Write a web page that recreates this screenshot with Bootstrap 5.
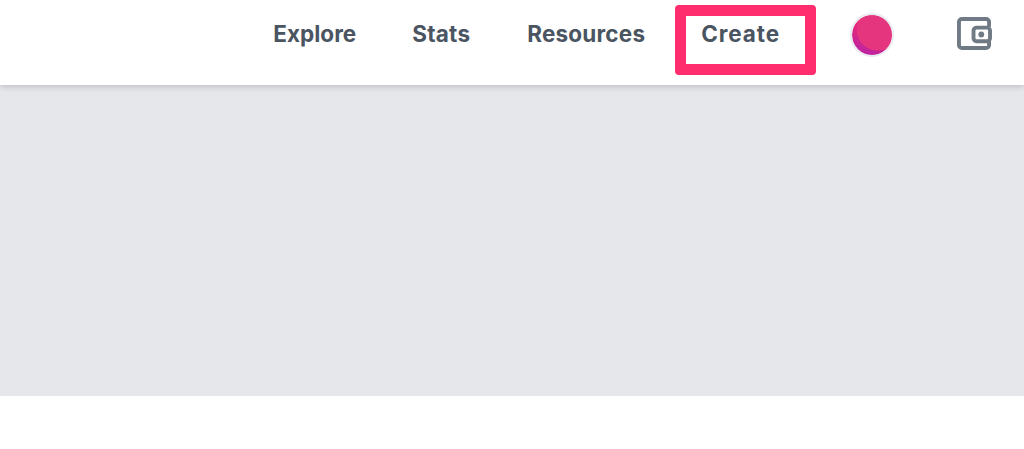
<!DOCTYPE html>
<html lang="en">
<head>
<meta charset="utf-8">
<title>Create</title>
<link href="https://cdn.jsdelivr.net/npm/bootstrap@5.3.0/dist/css/bootstrap.min.css" rel="stylesheet">
<style>
body { background: #fff; overflow: hidden; font-family: "Inter", "Noto Sans", sans-serif; }
.site-head { height: 85px; padding: 0 32px 17px 0; background: #fff; box-shadow: 0 2px 6px rgba(0,0,0,.16); z-index: 2; }
.site-link { padding: 0 28px; font-size: 22.5px; font-weight: 700; line-height: 32px; letter-spacing: .1px; color: #4a5561; text-decoration: none; }
.link-explore { letter-spacing: 0; }
.link-stats { letter-spacing: .25px; }
.link-resources { letter-spacing: .2px; margin-left: 1px; }
.link-create { letter-spacing: .9px; }
.hl-item { margin-right: 42px; }
.hl-frame { position: absolute; left: 2px; top: -13px; width: 141px; height: 70px; border: 11px solid #ff2d6e; border-radius: 4px; pointer-events: none; }
.avatar-dot { width: 44px; height: 44px; margin-top: 2px; border: 2px solid #e9ebef; border-radius: 50%; background: radial-gradient(circle 21px at 64% 37%, #e5357f 0 20.5px, rgba(229,53,127,0) 21px), linear-gradient(200deg, #ec2a74 35%, #c0249e 85%); background-clip: padding-box; }
.wallet-ico { margin-left: 63px; margin-bottom: 2px; }
.hero-band { height: 311px; background: #e5e7eb; }
</style>
</head>
<body>
<header class="site-head d-flex justify-content-end align-items-center position-relative">
  <nav class="d-flex align-items-center">
    <a class="site-link link-explore" href="#">Explore</a>
    <a class="site-link link-stats" href="#">Stats</a>
    <a class="site-link link-resources" href="#">Resources</a>
    <div class="hl-item position-relative">
      <a class="site-link link-create d-block" href="#">Create</a>
      <span class="hl-frame"></span>
    </div>
  </nav>
  <div class="avatar-dot flex-shrink-0"></div>
  <svg class="wallet-ico flex-shrink-0" width="35" height="33" viewBox="0 0 36 34" fill="none" stroke="#6f7a84" stroke-width="4" stroke-linejoin="round" aria-hidden="true">
    <path d="M33 10V5a3 3 0 0 0-3-3H5a3 3 0 0 0-3 3v24a3 3 0 0 0 3 3h25a3 3 0 0 0 3-3v-4"/>
    <rect x="17" y="11" width="17" height="14" rx="3"/>
    <circle cx="25" cy="18" r="3" fill="#6f7a84" stroke="none"/>
  </svg>
</header>
<main class="hero-band"></main>
<script src="https://cdn.jsdelivr.net/npm/bootstrap@5.3.0/dist/js/bootstrap.bundle.min.js"></script>
</body>
</html>
